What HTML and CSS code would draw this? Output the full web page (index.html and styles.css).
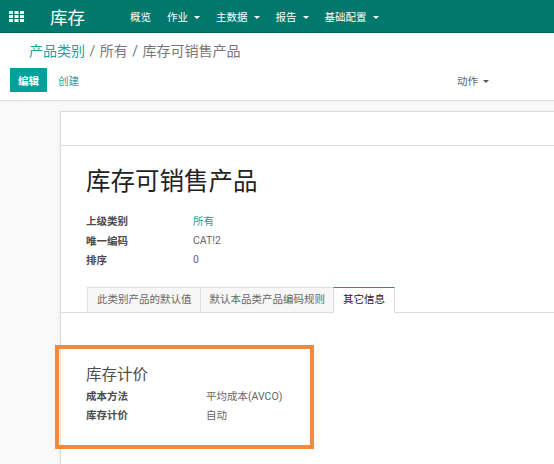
FILE: index.html
```html
<!DOCTYPE html>
<html lang="zh-CN">
  <head>
    <meta charset="UTF-8" />
    <meta name="viewport" content="width=device-width, initial-scale=1.0" />
    <title>库存可销售产品</title>
    <link rel="stylesheet" href="styles.css">
  </head>
  <body>
    <nav class="navbar">
      <svg class="apps-icon" width="15" height="11" viewBox="0 0 15 11">
        <rect x="0" y="0" width="4" height="3" fill="#fff" />
        <rect x="5.5" y="0" width="4" height="3" fill="#fff" />
        <rect x="11" y="0" width="4" height="3" fill="#fff" />
        <rect x="0" y="4" width="4" height="3" fill="#fff" />
        <rect x="5.5" y="4" width="4" height="3" fill="#fff" />
        <rect x="11" y="4" width="4" height="3" fill="#fff" />
        <rect x="0" y="8" width="4" height="3" fill="#fff" />
        <rect x="5.5" y="8" width="4" height="3" fill="#fff" />
        <rect x="11" y="8" width="4" height="3" fill="#fff" />
      </svg>
      <span class="brand">库存</span>
      <ul class="menu">
        <li>概览</li>
        <li>作业<span class="caret"></span></li>
        <li>主数据<span class="caret"></span></li>
        <li>报告<span class="caret"></span></li>
        <li>基础配置<span class="caret"></span></li>
      </ul>
    </nav>

    <div class="control-panel">
      <div class="breadcrumb">
        <a class="crumb-link">产品类别</a>
        <span class="sep">/</span>
        <span>所有</span>
        <span class="sep">/</span>
        <span>库存可销售产品</span>
      </div>
      <div class="cp-buttons">
        <button class="btn-primary">编辑</button>
        <button class="btn-link">创建</button>
        <div class="cp-actions">动作<span class="caret dark"></span></div>
      </div>
    </div>

    <div class="content">
      <div class="sheet">
        <div class="sheet-header"></div>
        <div class="sheet-body">
          <h1 class="title">库存可销售产品</h1>

          <table class="fields">
            <tr><td class="label">上级类别</td><td><a class="link">所有</a></td></tr>
            <tr><td class="label">唯一编码</td><td>CAT!2</td></tr>
            <tr><td class="label">排序</td><td>0</td></tr>
          </table>

          <ul class="tabs">
            <li class="tab">此类别产品的默认值</li>
            <li class="tab">默认本品类产品编码规则</li>
            <li class="tab active">其它信息</li>
          </ul>

          <div class="highlight">
            <div class="group-title">库存计价</div>
            <table class="fields wide">
              <tr><td class="label">成本方法</td><td>平均成本(AVCO)</td></tr>
              <tr><td class="label">库存计价</td><td>自动</td></tr>
            </table>
          </div>
        </div>
      </div>
    </div>
  </body>
</html>
```

FILE: styles.css
```css
body {
  margin: 0;
  width: 554px;
  height: 464px;
  overflow: hidden;
  font-family: Roboto, "Noto Sans CJK SC", sans-serif;
  font-size: 10.5px;
  color: #666;
  background: #f9f9f9;
}
ul {
  list-style: none;
  margin: 0;
  padding: 0;
}
.caret {
  display: inline-block;
  width: 0;
  height: 0;
  margin-left: 6px;
  vertical-align: middle;
  border-left: 3px solid transparent;
  border-right: 3px solid transparent;
  border-top: 3px solid #fff;
}
.caret.dark {
  border-top-color: #555;
  margin-left: 5px;
}

/* top bar */
.navbar {
  display: flex;
  align-items: center;
  height: 32px;
  background: #00786b;
  border-bottom: 1px solid #005e54;
  color: #fff;
}
.apps-icon {
  margin-left: 9px;
}
.brand {
  margin-left: 26px;
  font-size: 17.5px;
}
.menu {
  display: flex;
  margin-left: 45px;
  gap: 16px;
}
.menu li {
  font-size: 10.5px;
}

/* control panel */
.control-panel {
  background: #fff;
  padding: 8px 9px 8px;
  border-bottom: 1px solid #e2e2e2;
  box-shadow: 0 1px 2px rgba(0, 0, 0, 0.05);
}
.breadcrumb {
  padding-left: 20px;
  font-size: 14px;
  line-height: 20px;
  color: #777;
}
.crumb-link {
  color: #21a29b;
}
.sep {
  margin: 0 1px;
}
.cp-buttons {
  display: flex;
  align-items: center;
  margin-top: 7px;
}
.btn-primary {
  height: 24px;
  margin-left: 1px;
  padding: 0 8px;
  border: none;
  background: #00a09d;
  color: #fff;
  font: inherit;
  font-weight: bold;
}
.btn-link {
  margin-left: 4px;
  padding: 0 7px;
  border: none;
  background: none;
  color: #21a29b;
  font: inherit;
}
.cp-actions {
  margin-left: auto;
  margin-right: 56px;
  color: #666;
}

/* form sheet */
.content {
  padding-top: 10px;
  overflow: hidden;
}
.sheet {
  margin-left: 60px;
  width: 560px;
  background: #fff;
  border: 1px solid #dcdcdc;
  box-shadow: 0 2px 6px rgba(0, 0, 0, 0.06);
}
.sheet-header {
  height: 33px;
  border-bottom: 1px solid #dcdcdc;
}
.sheet-body {
  padding: 21px 25px 30px;
}
.title {
  margin: 0 0 14px;
  font-size: 24.5px;
  font-weight: normal;
  line-height: 30px;
  color: #222;
}
.fields {
  border-collapse: collapse;
}
.fields td {
  padding: 0;
  height: 19.5px;
  vertical-align: middle;
}
.fields .label {
  width: 107px;
  color: #4c4c4c;
  font-weight: bold;
}
.fields.wide .label {
  width: 120px;
}
.link {
  color: #21a29b;
}

/* notebook tabs */
.tabs {
  display: flex;
  margin: 17px -25px 0;
  padding-left: 26px;
  border-bottom: 1px solid #dcdcdc;
}
.tab {
  height: 24px;
  line-height: 24px;
  padding: 0 8px 0 9px;
  margin-bottom: -1px;
  background: #f7f7f7;
  border: 1px solid #e0e0e0;
  border-bottom-color: #dcdcdc;
  border-right: none;
  color: #666;
}
.tab.active {
  padding: 0 9px;
  background: #fff;
  border: 1px solid #dcdcdc;
  border-top: 1px solid #00a09d;
  border-bottom-color: #fff;
  color: #222;
}

/* annotated group */
.highlight {
  width: 259px;
  box-sizing: border-box;
  margin: 32px 0 0 -31px;
  padding: 16px 0 20px 27px;
  border: 4px solid #f6883a;
}
.group-title {
  font-size: 15.5px;
  line-height: 20px;
  color: #4c4c4c;
  margin-bottom: 1px;
}
```
